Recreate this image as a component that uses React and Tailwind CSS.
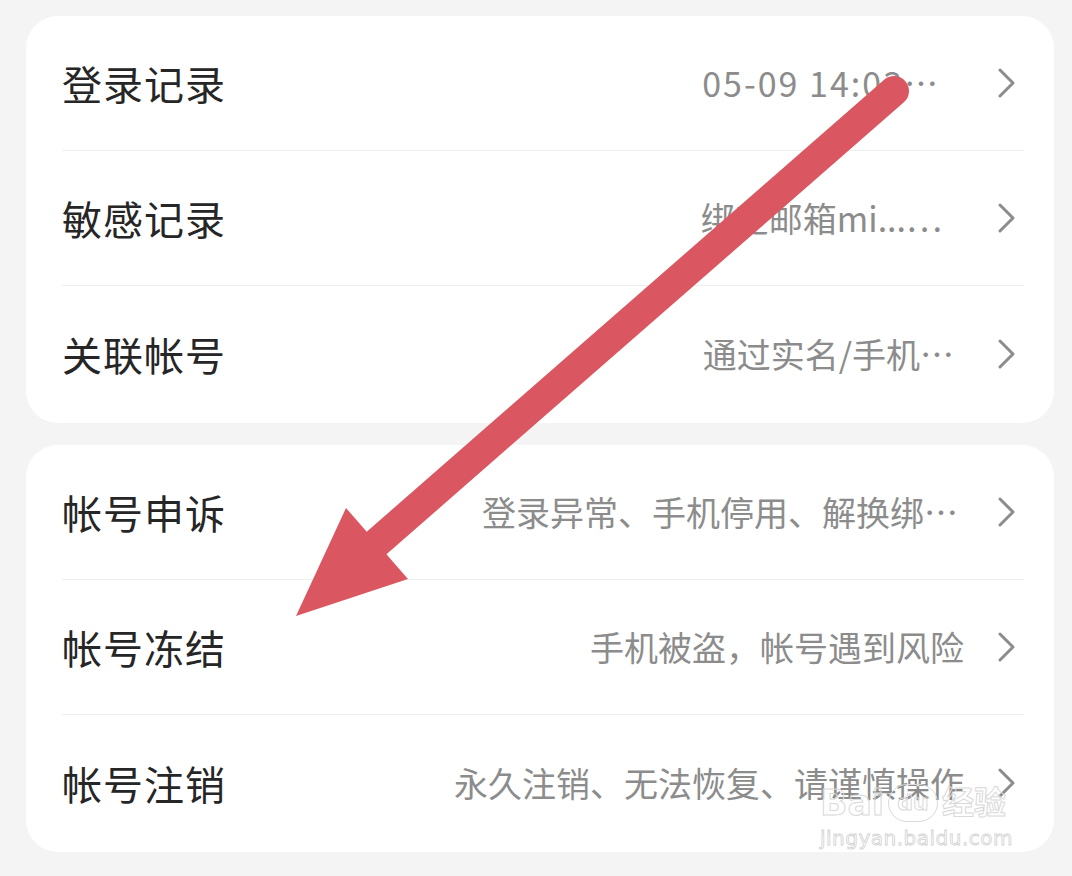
import React from "react";

const FONT = { fontFamily: '"Noto Sans CJK SC", "Noto Sans", sans-serif' };

const groups = [
  [
    { label: "登录记录", value: "05-09 14:03…", pad: "pr-[24px] tracking-[2px]" },
    { label: "敏感记录", value: "绑定邮箱mi...…", pad: "pr-[22px]" },
    { label: "关联帐号", value: "通过实名/手机…", pad: "pr-[10px]" },
  ],
  [
    { label: "帐号申诉", value: "登录异常、手机停用、解换绑…", pad: "pr-[6px]" },
    { label: "帐号冻结", value: "手机被盗，帐号遇到风险", pad: "pr-0" },
    { label: "帐号注销", value: "永久注销、无法恢复、请谨慎操作", pad: "pr-0" },
  ],
];

function Chevron() {
  return (
    <svg width="20" height="30" viewBox="0 0 20 30" fill="none" className="shrink-0">
      <path d="M3 2 L16 15 L3 28" stroke="#8c8c8c" strokeWidth="3" strokeLinecap="round" strokeLinejoin="round" />
    </svg>
  );
}

function Row({ label, value, pad, last }) {
  return (
    <div className="pl-[36px] pr-[30px]">
      <div className={`h-[135px] flex items-center ${last ? "" : "border-b border-[#efefef]"}`}>
        <span className="text-[40px] leading-none font-normal text-[#262626] tracking-[1px]">{label}</span>
        <div className="ml-auto flex items-center">
          <span className={`text-[34px] leading-none font-normal text-[#8c8c8c] ${pad}`}>{value}</span>
          <div className="ml-[33px] mr-[7px]">
            <Chevron />
          </div>
        </div>
      </div>
    </div>
  );
}

export default function App() {
  return (
    <div className="relative w-[1072px] h-[876px] overflow-hidden bg-[#f4f4f4] pl-[26px] pr-[18px] pt-[16px]" style={FONT}>
      <div className="flex flex-col gap-[22px]">
        {groups.map((rows, gi) => (
          <div key={gi} className="bg-white rounded-[32px] pb-[2px]">
            {rows.map((r, i) => (
              <Row key={i} {...r} last={i === rows.length - 1} />
            ))}
          </div>
        ))}
      </div>

      {/* watermark */}
      <div className="absolute left-[820px] top-[784px] pointer-events-none select-none">
        <div className="flex items-center gap-[4px] text-[36px] leading-none font-bold text-transparent [-webkit-text-stroke:1px_#d9d9d9]" style={{ fontFamily: '"DejaVu Sans", "Noto Sans CJK SC", sans-serif' }}>
          <span>Bai</span>
          <span className="w-[50px] h-[38px] rounded-full border border-[#dadada] text-[22px] flex items-center justify-center">du</span>
          <span className="text-[32px]">经验</span>
        </div>
        <div className="mt-[6px] text-[20px] leading-none text-transparent [-webkit-text-stroke:0.8px_#d2d2d2] tracking-[0.5px]" style={{ fontFamily: '"DejaVu Sans", sans-serif' }}>
          jingyan.baidu.com
        </div>
      </div>

      {/* red arrow annotation */}
      <svg className="absolute inset-0 pointer-events-none" width="1072" height="876" viewBox="0 0 1072 876">
        <line x1="894" y1="91" x2="372" y2="547" stroke="#da5660" strokeWidth="30" strokeLinecap="round" />
        <polygon points="346,508 408,579 296,616" fill="#da5660" />
      </svg>
    </div>
  );
}
